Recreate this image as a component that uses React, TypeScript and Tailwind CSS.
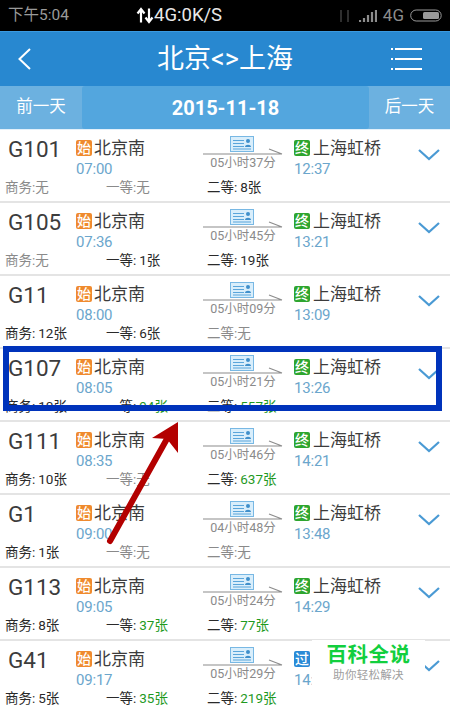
const font = { fontFamily: '"Roboto", "Noto Sans CJK SC", sans-serif' };

type Seat = string;
type Train = { no: string; dep: string; arr: string; dur: string; a: Seat; b: Seat; c: Seat; badge?: string };

const trains: Train[] = [
  { no: "G101", dep: "07:00", arr: "12:37", dur: "05小时37分", a: "无", b: "无", c: "8张" },
  { no: "G105", dep: "07:36", arr: "13:21", dur: "05小时45分", a: "无", b: "1张", c: "19张" },
  { no: "G11", dep: "08:00", arr: "13:09", dur: "05小时09分", a: "12张", b: "6张", c: "无" },
  { no: "G107", dep: "08:05", arr: "13:26", dur: "05小时21分", a: "10张", b: "94张", c: "557张" },
  { no: "G111", dep: "08:35", arr: "14:21", dur: "05小时46分", a: "10张", b: "无", c: "637张" },
  { no: "G1", dep: "09:00", arr: "13:48", dur: "04小时48分", a: "1张", b: "无", c: "无" },
  { no: "G113", dep: "09:05", arr: "14:29", dur: "05小时24分", a: "8张", b: "37张", c: "77张" },
  { no: "G41", dep: "09:17", arr: "14:46", dur: "05小时29分", a: "5张", b: "35张", c: "219张", badge: "过" },
];

function SeatLabel({ name, value, w }: { name: string; value: string; w: string }) {
  const n = parseInt(value, 10);
  const none = value === "无";
  const rich = !none && n >= 20;
  return (
    <span className={`${w} whitespace-nowrap ${none ? "text-[#8a8a8a]" : "text-[#2a2a2a]"}`}>
      {name}:<span className={`${rich ? "text-[#1f9a1f]" : ""} ${none ? "" : "ml-[3px]"}`}>{value}</span>
    </span>
  );
}

function Ticket() {
  return (
    <svg width="24" height="16" viewBox="0 0 24 16" className="block">
      <rect x="0.5" y="0.5" width="23" height="15" fill="#d9eefb" stroke="#78b8e4" />
      <path d="M3 4.5h11M3 7.5h11M3 10.5h11M3 13h18" stroke="#5aa5da" strokeWidth="1" fill="none" />
      <circle cx="18" cy="5" r="2" fill="#3f8fcb" />
      <path d="M15 11c0-3 6-3 6 0z" fill="#3f8fcb" />
    </svg>
  );
}

function Badge({ text, color }: { text: string; color: string }) {
  return (
    <span className={`flex h-4 w-4 shrink-0 items-center justify-center rounded-[2px] text-[14px] font-medium leading-none text-white ${color}`}>
      {text}
    </span>
  );
}

function Row({ t }: { t: Train }) {
  return (
    <div className="h-[73px] shrink-0 overflow-hidden border-b-2 border-[#e4e4e4] bg-white">
      <div className="flex h-[46px] items-start">
        <div className="w-[76px] pl-2 pt-[6px] text-[22.5px] leading-[26px] text-[#3c3c3c]">{t.no}</div>
        <div className="w-[127px] pt-[9px]">
          <div className="flex items-center gap-[2px] text-[17px] leading-[18px] text-[#3c3c3c]">
            <Badge text="始" color="bg-[#ef8a2e]" />
            <span>北京南</span>
          </div>
          <div className="mt-[3px] text-[15px] leading-[18px] tracking-[-0.2px] text-[#6ba6cc]">{t.dep}</div>
        </div>
        <div className="flex w-[91px] flex-col pt-[6px]">
          <div className="pl-[27px]"><Ticket /></div>
          <svg width="80" height="7" viewBox="0 0 80 7" className="-mt-[4px] block">
            <path d="M0 6h79M66 1l13 5" stroke="#8c8c8c" strokeWidth="1.2" fill="none" />
          </svg>
          <div className="w-[80px] text-center text-[12.5px] leading-[15px] text-[#8a8a8a]">{t.dur}</div>
        </div>
        <div className="w-[124px] pt-[9px]">
          <div className="flex items-center gap-[3px] text-[17px] leading-[18px] text-[#3c3c3c]">
            <Badge text={t.badge ?? "终"} color={t.badge ? "bg-[#2a8ad6]" : "bg-[#2ea52e]"} />
            <span>上海虹桥</span>
          </div>
          <div className="mt-[3px] text-[15px] leading-[18px] tracking-[-0.2px] text-[#6ba6cc]">{t.arr}</div>
        </div>
        <svg width="22" height="12" viewBox="0 0 22 12" className="mt-[19px] shrink-0">
          <path d="M1 1l10 9L21 1" stroke="#4a9ad4" strokeWidth="2.2" fill="none" />
        </svg>
      </div>
      <div className="flex pl-[5px] pt-[2px] text-[13.5px] leading-[18px]">
        <SeatLabel name="商务" value={t.a} w="w-[101px]" />
        <SeatLabel name="一等" value={t.b} w="w-[101px]" />
        <SeatLabel name="二等" value={t.c} w="w-[101px]" />
      </div>
    </div>
  );
}

export default function App() {
  return (
    <div className="relative h-[711px] w-[450px] overflow-hidden bg-white" style={font}>
      <div className="flex h-[31px] items-center justify-between bg-black pl-2 pr-[7px]">
        <span className="w-[128px] text-[15.5px] text-[#9a9a9a]">下午5:04</span>
        <span className="flex flex-1 items-center text-[18.5px] text-[#e8e8e8]">
          <svg width="18" height="17" viewBox="0 0 18 16">
            <path d="M5 15V3M1.5 6L5 1.5 8.5 6M13 1v12M9.500 10l3.500 4.500L16.500 10" stroke="#fff" strokeWidth="2.2" fill="none" />
          </svg>
          4G:0K/S
        </span>
        <span className="flex items-center gap-[6px]">
          <svg width="15" height="14" viewBox="0 0 15 14" className="mr-[1px]">
            <path d="M4 1v12M11 1v12" stroke="#2e2e2e" strokeWidth="2" />
          </svg>
          <svg width="18" height="14" viewBox="0 0 18 14">
            <path d="M1 13v-2M5 13V9M9 13V6M13 13V3M17 13V1" stroke="#8c8c8c" strokeWidth="2.200" />
          </svg>
          <span className="text-[17px] text-[#8c8c8c]">4G</span>
          <svg width="33" height="13" viewBox="0 0 33 13">
            <rect x="0.700" y="1" width="30.500" height="11" rx="5.500" fill="none" stroke="#9a9a9a" />
            <rect x="13" y="3" width="16" height="7" rx="1.500" fill="#9a9a9a" />
          </svg>
        </span>
      </div>

      <div className="flex h-[55px] items-center justify-between border-t border-[#3a9ae0] bg-[#2888d0] pl-[17px] pr-[28px]">
        <svg width="42" height="24" viewBox="0 0 42 24">
          <path d="M13 2L2.500 12 13 22" stroke="#fff" strokeWidth="2" fill="none" />
        </svg>
        <span className="text-[27px] leading-none text-white">北京&lt;&gt;上海</span>
        <svg width="31" height="24" viewBox="0 0 31 24">
          <path d="M4 2h27M4 12h27M4 22h27" stroke="#fff" strokeWidth="2" />
          <path d="M0 2h2M0 12h2M0 22h2" stroke="#fff" strokeWidth="2" />
        </svg>
      </div>

      <div className="flex h-[44px] border-b border-[#e2f0fa] bg-[#6cb1e0] text-white">
        <div className="flex w-[82px] items-center justify-center text-[16.5px]">前一天</div>
        <div className="flex flex-1 items-center justify-center rounded-[3px] bg-[#53a6de] text-[20px] font-bold">2015-11-18</div>
        <div className="flex w-[81px] items-center justify-center text-[16.5px]">后一天</div>
      </div>

      <div className="flex flex-col">
        {trains.map((t) => (
          <Row key={t.no} t={t} />
        ))}
      </div>

      <div className="absolute left-[3px] top-[346px] h-[65px] w-[439px] border-[6px] border-[#0033bb]" />

      <svg className="absolute left-[100px] top-[415px]" width="90" height="135" viewBox="0 0 90 135">
        <path d="M10 126L68 22" stroke="#b30000" strokeWidth="6" strokeLinecap="round" fill="none" />
        <path d="M78 7L52 23 67 24 78 38z" fill="#b30000" />
      </svg>

      <div className="absolute left-[312px] top-[640px] flex h-[71px] w-[113px] flex-col items-center bg-white pt-[2px]">
        <span className="text-[20.500px] font-bold leading-[26px] tracking-[0.500px] text-[#12cf3e]">百科全说</span>
        <span className="text-[11.500px] leading-[15px] tracking-[0.300px] text-[#a0a0a0]">助你轻松解决</span>
      </div>
    </div>
  );
}
